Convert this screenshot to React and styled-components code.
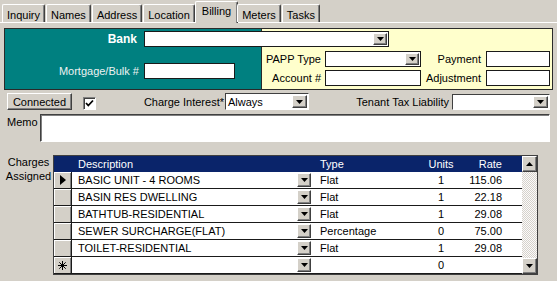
import React from "react";
import styled, { createGlobalStyle, css } from "styled-components";

const GlobalStyle = createGlobalStyle`
  html, body {
    margin: 0;
    padding: 0;
    background: #d4d0c8;
  }
  body {
    font-family: "Liberation Sans", Arial, sans-serif;
    font-size: 11px;
    color: #000;
  }
`;

const raised = css`
  background: #d4d0c8;
  border: 1px solid;
  border-color: #ffffff #404040 #404040 #ffffff;
  box-shadow: inset -1px -1px 0 #808080;
`;

const Page = styled.div`
  width: 557px;
  height: 281px;
  overflow: hidden;
  box-sizing: border-box;
`;

const TabStrip = styled.div`
  display: flex;
  align-items: flex-end;
  height: 22px;
  padding-left: 2px;
  position: relative;
  z-index: 1;
`;

const Tab = styled.div`
  box-sizing: border-box;
  height: ${(p) => (p.$active ? 22 : 18)}px;
  padding: ${(p) => (p.$active ? "2px 6px 0" : "3px 4px 0")};
  margin: ${(p) => (p.$active ? "0 -1px -1px" : "0 1px 0 0")};
  background: #d4d0c8;
  border-top: 1px solid #fff;
  border-left: 1px solid #fff;
  border-right: 1px solid #404040;
  border-radius: 2px 2px 0 0;
  box-shadow: inset -1px 0 0 #808080;
  line-height: 14px;
  white-space: nowrap;
`;

const Body = styled.div`
  border-top: 1px solid #fff;
`;

const InfoPanel = styled.div`
  box-sizing: border-box;
  width: 549px;
  height: 62px;
  margin: 5px 0 0 4px;
  padding-top: 2px;
  border: 1px solid #2a2a2a;
  background: linear-gradient(
    to right,
    #008080 0 256px,
    #2a2a2a 256px 257px,
    #ffffcc 257px
  );
  display: grid;
  grid-template-columns: 139px 118px 63px 96px 65px 64px;
  grid-template-rows: 20px 19px 16px;
  align-items: start;
`;

const PanelLabel = styled.div`
  grid-column: ${(p) => p.$col};
  grid-row: ${(p) => p.$row};
  align-self: ${(p) => p.$align || "start"};
  margin-bottom: ${(p) => p.$mb || 0}px;
  text-align: right;
  padding-right: ${(p) => p.$pr || 4}px;
  line-height: 16px;
  color: ${(p) => p.$color || "#000"};
  font-weight: ${(p) => (p.$bold ? 700 : 400)};
  font-size: ${(p) => (p.$bold ? 12 : 11)}px;
  white-space: nowrap;
`;

const PanelCell = styled.div`
  grid-column: ${(p) => p.$col};
  grid-row: ${(p) => p.$row};
  align-self: ${(p) => p.$align || "start"};
  margin-bottom: ${(p) => p.$mb || 0}px;
  justify-self: start;
`;

const FlatField = styled.div`
  box-sizing: border-box;
  width: ${(p) => p.$w}px;
  height: 16px;
  background: #fff;
  border: 1px solid #1a1a1a;
`;

const Combo = styled.div`
  box-sizing: border-box;
  display: flex;
  align-items: center;
  justify-content: space-between;
  width: ${(p) => p.$w}px;
  height: ${(p) => p.$h || 16}px;
  margin-top: ${(p) => p.$mt || 0}px;
  padding: 0 1px 0 2px;
  background: #fff;
  ${(p) =>
    p.$sunken
      ? css`
          border: 1px solid;
          border-color: #404040 #ffffff #ffffff #404040;
        `
      : css`
          border: 1px solid #1a1a1a;
        `}
  white-space: nowrap;
`;

const DropButton = styled.span`
  ${raised};
  box-sizing: border-box;
  flex: none;
  width: ${(p) => p.$w || 15}px;
  height: ${(p) => p.$h || 13}px;
  display: flex;
  align-items: center;
  justify-content: center;
`;

const Arrow = ({ up }) => (
  <svg width="7" height="4" viewBox="0 0 7 4">
    <polygon points={up ? "0,4 7,4 3.5,0" : "0,0 7,0 3.5,4"} fill="#000" />
  </svg>
);

const Drop = (props) => (
  <DropButton {...props}>
    <Arrow />
  </DropButton>
);

const ControlRow = styled.div`
  display: flex;
  align-items: flex-start;
  height: 18px;
  margin-top: 3px;
  padding-left: 7px;
`;

const PushButton = styled.button`
  ${raised};
  box-sizing: border-box;
  width: 65px;
  height: 17px;
  padding: 0;
  font-family: inherit;
  font-size: 11px;
  color: #000;
  line-height: 14px;
`;

const CheckBox = styled.span`
  box-sizing: border-box;
  width: 13px;
  height: 13px;
  margin: 4px 0 0 11px;
  background: #fff;
  border: 1px solid;
  border-color: #808080 #fff #fff #808080;
  box-shadow: inset 1px 1px 0 #404040;
  display: flex;
  align-items: center;
  justify-content: center;
`;

const RowLabel = styled.div`
  box-sizing: border-box;
  width: ${(p) => p.$w}px;
  text-align: right;
  padding-right: ${(p) => p.$pr || 1}px;
  line-height: 17px;
  margin-top: 1px;
  white-space: nowrap;
`;

const MemoRow = styled.div`
  display: flex;
  margin-top: 3px;
  padding-left: 7px;
`;

const MemoLabel = styled.div`
  width: 33px;
  padding-top: 1px;
  line-height: 14px;
`;

const MemoBox = styled.div`
  box-sizing: border-box;
  width: 510px;
  height: 28px;
  background: #fff;
  border: 1px solid;
  border-color: #404040 #fff #fff #404040;
  box-shadow: inset 1px 1px 0 #808080;
`;

const ChargesRow = styled.div`
  display: flex;
  margin-top: 13px;
  padding-left: 4px;
`;

const ChargesLabel = styled.div`
  width: 49px;
  text-align: center;
  line-height: 14px;
`;

const Grid = styled.div`
  box-sizing: border-box;
  width: 485px;
  height: 120px;
  border: 1px solid #404040;
  display: flex;
  background: #fff;
`;

const Table = styled.div`
  flex: 1;
  display: flex;
  flex-direction: column;
`;

const Columns = css`
  display: grid;
  grid-template-columns: 18px 242px 101px 52px 55px;
  align-items: center;
`;

const HeaderRow = styled.div`
  ${Columns};
  height: 16px;
  background: #0a246a;
  color: #fff;
`;

const DataRow = styled.div`
  ${Columns};
  box-sizing: border-box;
  height: 17px;
  border-bottom: 1px solid #1a1a1a;
`;

const Cell = styled.div`
  box-sizing: border-box;
  height: 100%;
  display: flex;
  align-items: center;
  justify-content: ${(p) =>
    p.$align === "right" ? "flex-end" : p.$align === "center" ? "center" : "space-between"};
  padding: 0 ${(p) => (p.$align === "right" ? 20 : p.$pad ? 3 : 0)}px 0
    ${(p) => (p.$align ? 0 : 6)}px;
  white-space: nowrap;
`;

const RowHead = styled.div`
  box-sizing: border-box;
  height: 100%;
  background: #d4d0c8;
  border-right: 1px solid #1a1a1a;
  box-shadow: inset 1px 1px 0 #fff, inset -1px 0 0 #808080;
  display: flex;
  align-items: center;
  justify-content: center;
`;

const ScrollBar = styled.div`
  width: 15px;
  display: flex;
  flex-direction: column;
  background: #e6e3de;
`;

const ScrollButton = styled.div`
  ${raised};
  box-sizing: border-box;
  height: 16px;
  display: flex;
  align-items: center;
  justify-content: center;
`;

const ScrollTrack = styled.div`
  flex: 1;
  background-color: #ebe9e4;
  background-image: repeating-conic-gradient(#ffffff 0 25%, #d4d0c8 0 50%);
  background-size: 2px 2px;
  opacity: 0.85;
`;

const Pointer = () => (
  <svg width="6" height="10" viewBox="0 0 6 10">
    <polygon points="0,0 6,5 0,10" fill="#000" />
  </svg>
);

const Star = () => (
  <svg width="9" height="9" viewBox="0 0 9 9" stroke="#000" strokeWidth="1">
    <line x1="4.5" y1="0" x2="4.5" y2="9" />
    <line x1="0" y1="4.5" x2="9" y2="4.5" />
    <line x1="1.3" y1="1.3" x2="7.7" y2="7.7" />
    <line x1="7.7" y1="1.3" x2="1.3" y2="7.7" />
  </svg>
);

const Check = () => (
  <svg width="9" height="9" viewBox="0 0 9 9">
    <polyline points="1,4 3.3,6.5 8,1.5" fill="none" stroke="#000" strokeWidth="1.8" />
  </svg>
);

const tabs = ["Inquiry", "Names", "Address", "Location", "Billing", "Meters", "Tasks"];

const charges = [
  { desc: "BASIC UNIT - 4 ROOMS", type: "Flat", units: "1", rate: "115.06" },
  { desc: "BASIN RES DWELLING", type: "Flat", units: "1", rate: "22.18" },
  { desc: "BATHTUB-RESIDENTIAL", type: "Flat", units: "1", rate: "29.08" },
  { desc: "SEWER SURCHARGE(FLAT)", type: "Percentage", units: "0", rate: "75.00" },
  { desc: "TOILET-RESIDENTIAL", type: "Flat", units: "1", rate: "29.08" },
];

const App = () => {
  return (
    <>
      <GlobalStyle />
      <Page>
        <TabStrip>
          {tabs.map((t) => (
            <Tab key={t} $active={t === "Billing"}>
              {t}
            </Tab>
          ))}
        </TabStrip>
        <Body>
          <InfoPanel>
            <PanelLabel $col="1" $row="1" $color="#fff" $bold $pr={7}>
              Bank
            </PanelLabel>
            <PanelCell $col="2 / 5" $row="1">
              <Combo $w={245}>
                <span />
                <Drop $w={14} $h={12} />
              </Combo>
            </PanelCell>

            <PanelLabel $col="1" $row="2 / 4" $align="end" $mb={7} $color="#eef2f2" $pr={5}>
              Mortgage/Bulk #
            </PanelLabel>
            <PanelCell $col="2" $row="2 / 4" $align="end" $mb={7}>
              <FlatField $w={91} />
            </PanelCell>

            <PanelLabel $col="3" $row="2">PAPP Type</PanelLabel>
            <PanelCell $col="4" $row="2">
              <Combo $w={96}>
                <span />
                <Drop $w={14} $h={12} />
              </Combo>
            </PanelCell>
            <PanelLabel $col="5" $row="2" $pr={5}>Payment</PanelLabel>
            <PanelCell $col="6" $row="2">
              <FlatField $w={64} />
            </PanelCell>

            <PanelLabel $col="3" $row="3">Account #</PanelLabel>
            <PanelCell $col="4" $row="3">
              <FlatField $w={96} />
            </PanelCell>
            <PanelLabel $col="5" $row="3" $pr={5}>Adjustment</PanelLabel>
            <PanelCell $col="6" $row="3">
              <FlatField $w={64} />
            </PanelCell>
          </InfoPanel>

          <ControlRow>
            <PushButton>Connected</PushButton>
            <CheckBox>
              <Check />
            </CheckBox>
            <RowLabel $w={129}>Charge Interest*</RowLabel>
            <Combo $w={84} $h={17} $sunken>
              <span>Always</span>
              <Drop $w={15} $h={13} />
            </Combo>
            <RowLabel $w={143} $pr={3}>Tenant Tax Liability</RowLabel>
            <Combo $w={98} $h={16} $mt={1} $sunken>
              <span />
              <Drop $w={15} $h={12} />
            </Combo>
          </ControlRow>

          <MemoRow>
            <MemoLabel>Memo</MemoLabel>
            <MemoBox />
          </MemoRow>

          <ChargesRow>
            <ChargesLabel>
              Charges
              <br />
              Assigned
            </ChargesLabel>
            <Grid>
              <Table>
                <HeaderRow>
                  <span />
                  <Cell>Description</Cell>
                  <Cell>Type</Cell>
                  <Cell $align="center">Units</Cell>
                  <Cell $align="right">Rate</Cell>
                </HeaderRow>
                {charges.map((c, i) => (
                  <DataRow key={c.desc}>
                    <RowHead>{i === 0 && <Pointer />}</RowHead>
                    <Cell $pad>
                      {c.desc}
                      <Drop $w={14} $h={14} />
                    </Cell>
                    <Cell>{c.type}</Cell>
                    <Cell $align="center">{c.units}</Cell>
                    <Cell $align="right">{c.rate}</Cell>
                  </DataRow>
                ))}
                <DataRow>
                  <RowHead>
                    <Star />
                  </RowHead>
                  <Cell $pad>
                    <span />
                    <Drop $w={14} $h={14} />
                  </Cell>
                  <Cell />
                  <Cell $align="center">0</Cell>
                  <Cell $align="right" />
                </DataRow>
              </Table>
              <ScrollBar>
                <ScrollButton>
                  <Arrow up />
                </ScrollButton>
                <ScrollTrack />
                <ScrollButton>
                  <Arrow />
                </ScrollButton>
              </ScrollBar>
            </Grid>
          </ChargesRow>
        </Body>
      </Page>
    </>
  );
};

export default App;
